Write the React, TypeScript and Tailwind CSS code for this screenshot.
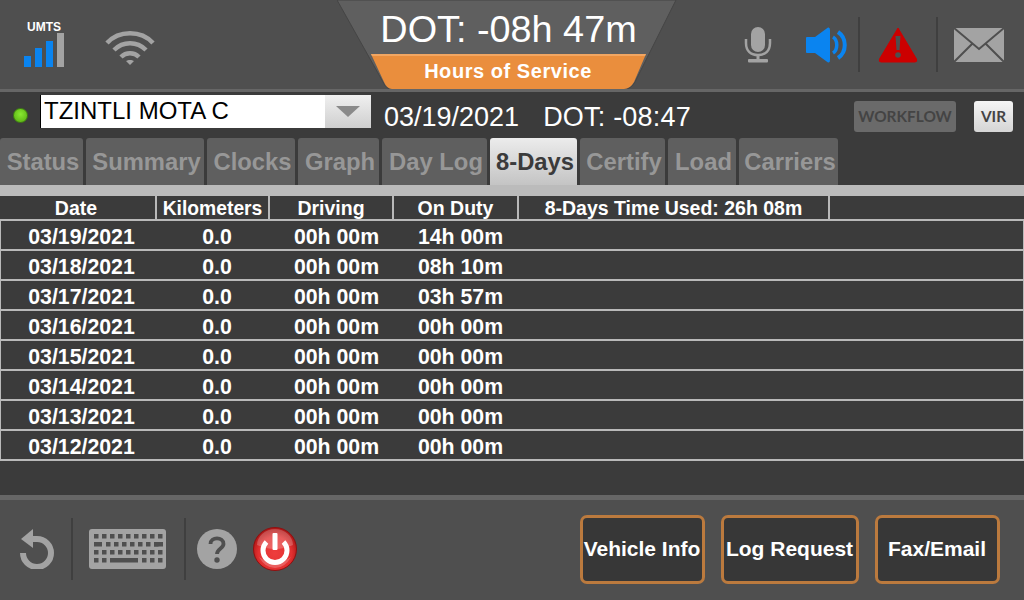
import React from "react";

const F = "font-['Liberation_Sans',Arial,sans-serif]";
const tabs = [
  { t: "Status", w: "w-[83px]" },
  { t: "Summary", w: "w-[118px]" },
  { t: "Clocks", w: "w-[88px]" },
  { t: "Graph", w: "w-[81px]" },
  { t: "Day Log", w: "w-[105px]" },
  { t: "8-Days", w: "w-[87px]", active: true },
  { t: "Certify", w: "w-[85px]" },
  { t: "Load", w: "w-[68px]" },
  { t: "Carriers", w: "w-[99px]" },
];
const rows = [
  ["03/19/2021", "14h 00m"],
  ["03/18/2021", "08h 10m"],
  ["03/17/2021", "03h 57m"],
  ["03/16/2021", "00h 00m"],
  ["03/15/2021", "00h 00m"],
  ["03/14/2021", "00h 00m"],
  ["03/13/2021", "00h 00m"],
  ["03/12/2021", "00h 00m"],
];

function Signal() {
  return (
    <div className="w-[40px] flex flex-col items-center">
      <div className="h-[11px] leading-[11px] text-[12px] font-bold text-white whitespace-nowrap">UMTS</div>
      <svg width="40" height="35" viewBox="0 0 40 35" className="block">
        <rect x="0" y="23" width="7" height="11" fill="#0a84f0" />
        <rect x="11" y="15" width="7" height="19" fill="#0a84f0" />
        <rect x="22" y="8" width="7" height="26" fill="#0a84f0" />
        <rect x="33" y="0" width="7" height="34" fill="#a3a3a3" />
      </svg>
    </div>
  );
}
function Wifi() {
  return (
    <svg width="50" height="36" viewBox="0 0 50 36" className="block" fill="none" stroke="#a3a3a3" strokeWidth="4.5">
      <path d="M2 13 C14 0 36 0 48 13" />
      <path d="M9 20 C18 11 32 11 41 20" />
      <path d="M16 27 C21 22 29 22 34 27" />
      <path d="M21 31 L25 35 L29 31 C27 29.500 23 29.500 21 31Z" fill="#a3a3a3" stroke="none" />
    </svg>
  );
}
function Mic() {
  return (
    <svg width="28" height="36" viewBox="0 0 28 36" className="block">
      <rect x="7" y="0" width="14" height="25" rx="7" fill="#a3a3a3" />
      <path d="M2 12 V16 C2 24 7 28 14 28 C21 28 26 24 26 16 V12" fill="none" stroke="#a3a3a3" strokeWidth="2.500" />
      <rect x="12.500" y="28" width="3" height="6" fill="#a3a3a3" />
      <rect x="4" y="32" width="20" height="3.500" rx="1" fill="#a3a3a3" />
    </svg>
  );
}
function Speaker() {
  return (
    <svg width="42" height="36" viewBox="0 0 42 36" className="block">
      <path d="M1 10 H9 L22 0.500 Q24 0 24 3 V33 Q24 36 22 35.500 L9 26 H1 Q0 26 0 25 V11 Q0 10 1 10Z" fill="#0a84f0" />
      <path d="M27 10 C32 13 32 23 27 26" fill="none" stroke="#0a84f0" strokeWidth="3.500" />
      <path d="M32 5 C41 11 41 25 32 31" fill="none" stroke="#0a84f0" strokeWidth="4" />
    </svg>
  );
}
function Warn() {
  return (
    <svg width="40" height="36" viewBox="0 0 40 36" className="block">
      <path d="M20 1 L38.500 32 Q39.500 35 37 35 H3 Q0.500 35 1.500 32 Z" fill="#cc0000" stroke="#cc0000" strokeLinejoin="round" />
      <path d="M17.500 9 H22.500 L21.500 23 H18.500 Z" fill="#4f4f4f" />
      <circle cx="20" cy="28" r="2.800" fill="#4f4f4f" />
    </svg>
  );
}
function Mail() {
  return (
    <svg width="50" height="34" viewBox="0 0 50 34" className="block">
      <rect x="0" y="0" width="50" height="34" fill="#a3a3a3" />
      <path d="M0 0 L25 21 L50 0 M0 34 L18 16 M50 34 L32 16" fill="none" stroke="#4f4f4f" strokeWidth="2" />
    </svg>
  );
}
function Undo() {
  return (
    <svg width="38" height="40" viewBox="0 0 38 40" className="block">
      <path d="M13 10 H19 A14 14 0 1 1 5 24" fill="none" stroke="#a3a3a3" strokeWidth="6" />
      <path d="M15 0 V19 L3 10 Z" fill="#a3a3a3" />
    </svg>
  );
}
function Keyboard() {
  const keys: React.ReactNode[] = [];
  const r = (x: number, y: number, w: number, k: string) => (
    <rect key={k} x={x} y={y} width={w} height="4.500" fill="#4f4f4f" />
  );
  for (let i = 0; i < 9; i++) keys.push(r(5 + i * 8, 5, 4.5, "a" + i));
  keys.push(r(5, 13, 8, "b0"));
  for (let i = 0; i < 7; i++) keys.push(r(17 + i * 8, 13, 4.5, "b" + (i + 1)));
  keys.push(r(65, 13, 9, "b9"));
  for (let i = 0; i < 9; i++) keys.push(r(5 + i * 8, 21, 4.5, "c" + i));
  keys.push(r(5, 29, 4.5, "d0"), r(13, 29, 4.5, "d1"), r(21, 29, 28, "d2"));
  for (let i = 0; i < 3; i++) keys.push(r(53 + i * 8, 29, 4.5, "d" + (i + 3)));
  return (
    <svg width="77" height="40" viewBox="0 0 77 40" className="block">
      <rect width="77" height="40" rx="3" fill="#a3a3a3" />
      {keys}
    </svg>
  );
}
function Help() {
  return (
    <svg width="40" height="40" viewBox="0 0 40 40" className="block">
      <circle cx="20" cy="20" r="20" fill="#a3a3a3" />
      <path d="M13.500 15 C13.500 7.500 26.500 7.500 26.500 15 C26.500 19.500 20 19.500 20 25" fill="none" stroke="#4f4f4f" strokeWidth="3.800" />
      <circle cx="20" cy="31" r="2.700" fill="#4f4f4f" />
    </svg>
  );
}
function Power() {
  return (
    <svg width="44" height="44" viewBox="0 0 44 44" className="block">
      <defs>
        <radialGradient id="pw" cx="50%" cy="60%" r="55%">
          <stop offset="0%" stopColor="#ee3d3d" />
          <stop offset="70%" stopColor="#e23030" />
          <stop offset="100%" stopColor="#b01818" />
        </radialGradient>
      </defs>
      <circle cx="22" cy="22" r="21.500" fill="url(#pw)" stroke="#8f1010" strokeWidth="1" />
      <path d="M4 18 A18 16 0 0 1 40 18 Q22 26 4 18Z" fill="#ffffff" fillOpacity="0.22" />
      <path d="M6 30 Q22 42 38 30 Q32 41 22 41 Q12 41 6 30Z" fill="#ffffff" fillOpacity="0.22" />
      <path d="M13.500 15 A12 12 0 1 0 30.500 15" fill="none" stroke="#fff" strokeWidth="5" />
      <rect x="19.500" y="6" width="5" height="17" rx="1" fill="#fff" />
    </svg>
  );
}

function Sep() {
  return <div className="w-[2px] h-[55px] bg-[#3f3f3f]" />;
}

function HeadCell({ w, children }: { w: string; children?: React.ReactNode }) {
  return (
    <div className={`${w} h-full border-r-2 border-[#b9b9b9] flex items-center justify-center pt-[3px] text-[19.5px] font-bold text-white whitespace-nowrap`}>
      {children}
    </div>
  );
}

function FootBtn({ w, children }: { w: string; children: React.ReactNode }) {
  return (
    <div className={`${w} h-[69px] rounded-[7px] border-[3px] border-[#bb7a3e] bg-[#373737] flex items-center justify-center pr-[1px] text-[21px] font-bold text-white whitespace-nowrap`}>
      {children}
    </div>
  );
}

export default function App() {
  return (
    <div className={`${F} w-[1024px] h-[600px] overflow-hidden flex flex-col bg-[#3b3b3b]`}>
      {/* top bar */}
      <header className="relative h-[92px] shrink-0 bg-[#4f4f4f] border-b-[3px] border-[#666666] flex items-center justify-between">
        <div className="flex items-center">
          <div className="ml-[24px]"><Signal /></div>
          <div className="ml-[41px] mt-[6px]"><Wifi /></div>
        </div>
        <div className="absolute left-[337px] top-0 w-[340px] h-[89px]">
          <svg width="340" height="89" viewBox="0 0 340 89" className="absolute inset-0">
            <path d="M0 0 H339 L298 82 Q294 89 288 89 H54 Q49 89 46 82 Z" fill="#5f5f5f" stroke="#454545" strokeWidth="1" />
            <path d="M34 54 H309 L297 82 Q293 89 287 89 H55 Q50 89 47 82 Z" fill="#ea8e3d" />
            <path d="M34 54 H309 L308 56 H35 Z" fill="#f2a662" />
          </svg>
          <div className="relative h-[54px] flex items-center justify-center text-[37.8px] text-white whitespace-nowrap pt-[5px] pl-[3px]">DOT: -08h 47m</div>
          <div className="relative h-[35px] flex items-center justify-center text-[20px] font-bold tracking-[0.55px] text-white pb-[2px] pl-[2px]">Hours of Service</div>
        </div>
        <div className="flex items-center mr-[20px]">
          <Mic />
          <div className="ml-[34px]"><Speaker /></div>
          <div className="ml-[10px]"><Sep /></div>
          <div className="ml-[18px]"><Warn /></div>
          <div className="ml-[18px]"><Sep /></div>
          <div className="ml-[16px]"><Mail /></div>
        </div>
      </header>

      {/* driver row */}
      <div className="h-[46px] shrink-0 flex items-start">
        <div className="ml-[13px] mt-[16px] w-[15px] h-[15px] rounded-full bg-[radial-gradient(circle_at_50%_40%,#88e830,#55aa10)] border border-[#3f8012]" />
        <div className="ml-[12px] mt-[3px] w-[331px] h-[33px] bg-white flex">
          <div className="flex-1 border-l border-black pl-[3px] text-[24px] leading-[32px] text-black">TZINTLI MOTA C</div>
          <div className="w-[46px] h-full bg-gradient-to-b from-[#f0f0f0] to-[#cfcfcf] flex items-center justify-center">
            <div className="w-0 h-0 border-l-[12px] border-r-[12px] border-t-[11px] border-l-transparent border-r-transparent border-t-[#8a8a8a]" />
          </div>
        </div>
        <div className="ml-[13px] mt-[9px] text-[27px] leading-[32px] text-white">03/19/2021</div>
        <div className="ml-[24px] mt-[9px] text-[27px] tracking-[0.2px] leading-[32px] text-white">DOT: -08:47</div>
        <div className="ml-auto mt-[9px] w-[102px] h-[31px] rounded-[3px] bg-[#6a6a6a] flex items-center justify-center font-['Lato',sans-serif] text-[15.4px] font-bold text-[#444444]">WORKFLOW</div>
        <div className="ml-[18px] mr-[11px] mt-[9px] w-[39px] h-[31px] rounded-[3px] bg-gradient-to-b from-[#f5f5f5] to-[#d5d5d5] flex items-center justify-center font-['Lato',sans-serif] text-[15.4px] font-bold text-[#444444]">VIR</div>
      </div>

      {/* tabs */}
      <div className="h-[47px] shrink-0 flex gap-[3px] items-end">
        {tabs.map((t) => (
          <div
            key={t.t}
            className={`${t.w} h-[47px] rounded-t-[3px] flex items-center justify-center pl-[3px] text-[23.8px] font-bold whitespace-nowrap ${
              t.active ? "bg-gradient-to-b from-[#ececec] to-[#c4c4c4] text-[#3b3b3b]" : "bg-[#5f5f5f] text-[#979797]"
            }`}
          >
            {t.t}
          </div>
        ))}
      </div>
      <div className="h-[11px] shrink-0 bg-[#bbbbbb]" />

      {/* table */}
      <div className="h-[263px] shrink-0 flex flex-col">
        <div className="h-[25px] shrink-0 border-b-2 border-[#b9b9b9] flex pl-[1px]">
          <div className="w-[156px] h-full border-r-2 border-[#b9b9b9] flex items-center justify-center pt-[3px] pr-[4px] text-[19.5px] font-bold text-white">Date</div>
          <div className="w-[113px] h-full border-r-2 border-[#b9b9b9] flex items-center justify-center pt-[3px] text-[19.3px] font-bold text-white">Kilometers</div>
          <HeadCell w="w-[124px]">Driving</HeadCell>
          <HeadCell w="w-[125px]">On Duty</HeadCell>
          <HeadCell w="w-[311px]">8-Days Time Used: 26h 08m</HeadCell>
        </div>
        {rows.map((r) => (
          <div key={r[0]} className="h-[30px] shrink-0 border-l border-r border-b-2 border-[#b9b9b9] flex items-center pt-[6px] text-[21.3px] font-bold text-white whitespace-nowrap">
            <div className="w-[161px] text-center">{r[0]}</div>
            <div className="w-[110px] text-center">0.0</div>
            <div className="w-[129px] text-center">00h 00m</div>
            <div className="w-[119px] text-center">{r[1]}</div>
          </div>
        ))}
      </div>

      <div className="flex-1" />

      {/* footer */}
      <footer className="h-[105px] shrink-0 bg-[#4f4f4f] border-t-[5px] border-[#666666] flex items-center pb-[2px]">
        <div className="ml-[18px]"><Undo /></div>
        <div className="ml-[15px]"><div className="w-[2px] h-[62px] bg-[#3f3f3f]" /></div>
        <div className="ml-[16px]"><Keyboard /></div>
        <div className="ml-[18px]"><div className="w-[2px] h-[62px] bg-[#3f3f3f]" /></div>
        <div className="ml-[11px]"><Help /></div>
        <div className="ml-[16px]"><Power /></div>
        <div className="ml-auto flex items-center gap-[16px] mr-[24px]">
          <FootBtn w="w-[125px]">Vehicle Info</FootBtn>
          <FootBtn w="w-[138px]">Log Request</FootBtn>
          <FootBtn w="w-[125px]">Fax/Email</FootBtn>
        </div>
      </footer>
    </div>
  );
}
